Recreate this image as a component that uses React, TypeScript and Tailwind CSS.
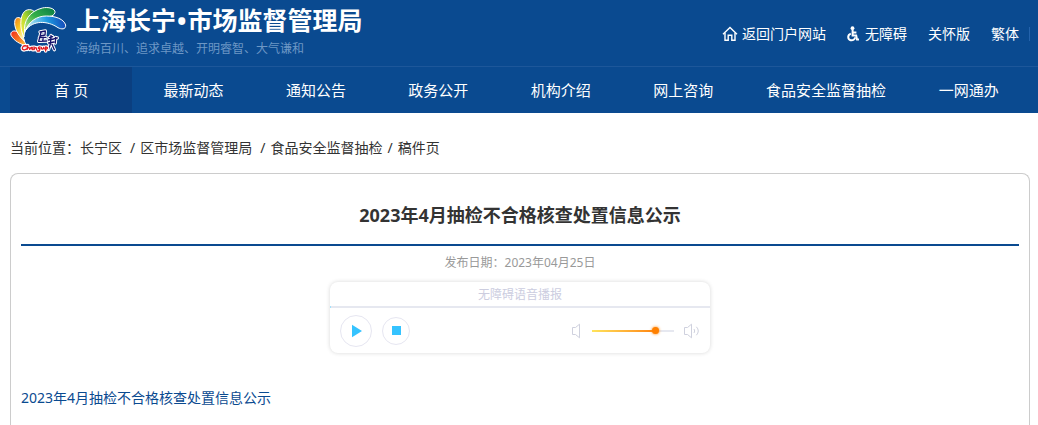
import { useState } from 'react';

const navItems = ['首 页', '最新动态', '通知公告', '政务公开', '机构介绍', '网上咨询', '食品安全监督抽检', '一网通办'];

function Logo() {
  return (
    <svg className="h-12 w-[60px] shrink-0" viewBox="25 19 180 144" fill="none" role="img" aria-label="上海长宁">
      <defs>
        <linearGradient id="p1" x1="0" y1="0" x2="1" y2="1">
          <stop offset="0" stopColor="#f0281e" />
          <stop offset="0.5" stopColor="#f5761e" />
          <stop offset="1" stopColor="#ffd94a" />
        </linearGradient>
        <linearGradient id="p2" x1="0" y1="0" x2="0.5" y2="1">
          <stop offset="0" stopColor="#f07a1c" />
          <stop offset="0.5" stopColor="#fbc822" />
          <stop offset="1" stopColor="#fff6a8" />
        </linearGradient>
        <linearGradient id="p3" x1="1" y1="0" x2="0" y2="1">
          <stop offset="0" stopColor="#2f9a3c" />
          <stop offset="0.5" stopColor="#b5d92c" />
          <stop offset="1" stopColor="#fff04a" />
        </linearGradient>
        <linearGradient id="p4" x1="1" y1="0" x2="0" y2="1">
          <stop offset="0" stopColor="#067a45" />
          <stop offset="0.5" stopColor="#35b049" />
          <stop offset="1" stopColor="#e4f48a" />
        </linearGradient>
        <linearGradient id="p5" x1="1" y1="0.4" x2="0" y2="0.5">
          <stop offset="0" stopColor="#1446b8" />
          <stop offset="0.45" stopColor="#1e9ae0" />
          <stop offset="1" stopColor="#c4f0f4" />
        </linearGradient>
      </defs>
      {/* petals */}
      <g stroke="#fff" strokeWidth="3" strokeLinejoin="round">
        <path fill="url(#p1)" d="M83 139C60 134 42 122 34 107C30 95 45 90 53 97C66 108 72 124 83 139Z" />
        <path fill="url(#p2)" d="M75 125C54 108 41 80 46 61C50 49 66 53 69 64C73 84 66 103 75 125Z" />
        <path fill="url(#p3)" d="M73 112C60 90 60 50 74 36C84 25 107 30 106 43C101 57 74 70 73 112Z" />
        <path fill="url(#p4)" d="M75 99C70 65 90 34 128 25C145 21 168 26 166 39C161 54 142 49 128 54C104 60 82 72 75 99Z" />
        <path fill="url(#p5)" d="M79 91C88 65 112 49 140 49C168 49 192 58 198 76C199 91 184 89 175 84C143 62 99 62 79 91Z" />
      </g>
      {/* ink figures */}
      <g strokeLinecap="round" strokeLinejoin="round">
        <path
          stroke="#fff"
          strokeWidth="10"
          d="M121 97L137 94L136 106L122 109M119 114L139 113M124 99L117 125M131 113L129 124M119 125L141 124M149 114L159 111M154 107L153 125M146 121L162 118M147 130L163 127M153 130L147 149M157 134L164 150M163 117L173 115M168 113L167 130"
        />
        <path
          stroke="#15126b"
          strokeWidth="4"
          d="M121 97L137 94L136 106L122 109M119 114L139 113M124 99L117 125M131 113L129 124M119 125L141 124M149 114L159 111M154 107L153 125M146 121L162 118M147 130L163 127M153 130L147 149M157 134L164 150M163 117L173 115M168 113L167 130"
        />
      </g>
      {/* script along the base */}
      <g strokeLinecap="round" strokeLinejoin="round">
        <path
          stroke="#fff"
          strokeWidth="11"
          d="M80 139C71 136 66 144 69 149C73 152 77 150 80 148M84 138L82 149C86 141 89 141 90 149M98 143C91 142 92 150 98 147L99 150M103 142L103 150C107 141 111 143 111 150M121 142C114 141 115 149 121 147L119 154L113 154M125 143C125 151 130 150 132 143L134 148M138 142L138 154M139 143C144 141 146 147 139 149"
        />
        <path
          stroke="#e01b22"
          strokeWidth="4"
          d="M80 139C71 136 66 144 69 149C73 152 77 150 80 148M84 138L82 149C86 141 89 141 90 149M98 143C91 142 92 150 98 147L99 150M103 142L103 150C107 141 111 143 111 150M121 142C114 141 115 149 121 147L119 154L113 154M125 143C125 151 130 150 132 143L134 148M138 142L138 154M139 143C144 141 146 147 139 149"
        />
      </g>
    </svg>
  );
}

function HomeIcon() {
  return (
    <svg className="size-4" viewBox="0 0 16 16" fill="none" stroke="currentColor" strokeWidth="1.4" aria-hidden="true">
      <path d="M1 8.2L8 1.4L15 8.2" />
      <path d="M3 7V14.3H6.2V9.3H9.8V14.3H13V7" />
    </svg>
  );
}

function WheelchairIcon() {
  return (
    <svg className="h-4 w-3" viewBox="0 0 12 16" fill="none" stroke="currentColor" strokeWidth="2" aria-hidden="true">
      <circle cx="5.5" cy="2.2" r="1.9" fill="currentColor" stroke="none" />
      <path d="M5.6 4V9.6H9.2L10 13.6H12M5.6 6.6H9.4" />
      <path d="M3.8 7.6C0.6 8.6 0.2 13.2 3.6 14.2C6 14.7 7.8 13.4 8.2 11.4" />
    </svg>
  );
}

function SpeakerIcon({ waves = false }: { waves?: boolean }) {
  return (
    <svg className="h-4 w-[18px]" viewBox="0 0 18 16" fill="none" stroke="#cfd1de" aria-hidden="true">
      <path d="M2.5 4.5H5.5L9.5 1.2V14.8L5.5 11.5H2.5Z" strokeLinejoin="round" />
      {waves && <path d="M12 6Q13.4 8 12 10M14.4 3.8Q18.2 8 14.4 12.2" />}
    </svg>
  );
}

function AudioPlayer() {
  const [volume, setVolume] = useState(80);

  return (
    <section className="mx-auto mt-2.5 w-full max-w-[380px] rounded-lg bg-white shadow-[0_0_4px_rgba(0,0,0,0.16)]">
      <div className="h-6 text-center text-xs leading-[26px] text-[#cccddf]">无障碍语音播报</div>
      <div className="h-0.5 bg-[#e6e8f0]">
        <div className="h-0.5 w-px bg-[#a5e2fb]" />
      </div>
      <div className="flex h-[45px] items-center px-2.5">
        <button aria-label="播放" className="flex size-8 items-center justify-center rounded-full border border-[#e6e6f1]">
          <svg className="h-3.5 w-3" viewBox="0 0 12 14" fill="#35c3ff">
            <path d="M2 .8L12 7L2 13.2Z" />
          </svg>
        </button>
        <button aria-label="停止" className="ml-2.5 flex size-7 items-center justify-center rounded-full border border-[#e6e6f1]">
          <span className="size-[9px] bg-[#35c3ff]" />
        </button>
        <div className="ml-auto flex items-center">
          <SpeakerIcon />
          <input
            type="range"
            aria-label="音量"
            min={0}
            max={100}
            value={volume}
            onChange={(e) => setVolume(Number(e.target.value))}
            className="mr-2 ml-1 h-0.5 w-[82px] appearance-none bg-[#e6e8f0] bg-linear-to-r from-[#ffe45c] to-[#ff8000] bg-no-repeat [&::-webkit-slider-thumb]:size-[7px] [&::-webkit-slider-thumb]:appearance-none [&::-webkit-slider-thumb]:rounded-full [&::-webkit-slider-thumb]:bg-[#ff8000] [&::-webkit-slider-thumb]:shadow-[0_0_3px_#ff8000]"
            style={{ backgroundSize: `${volume}% 100%` }}
          />
          <SpeakerIcon waves />
        </div>
      </div>
    </section>
  );
}

export default function App() {
  return (
    <div className="bg-white font-['Noto_Sans','Noto_Sans_CJK_SC',sans-serif] text-sm text-[#333]">
      <header className="bg-[#0a4a90] text-white">
        <div className="flex h-[66px] items-start justify-between px-2">
          <div className="flex pt-1.5">
            <Logo />
            <div className="ml-2">
              <h1 className="text-[25px] leading-7 font-bold">
                上海长宁<span className="mx-px">•</span>市场监督管理局
              </h1>
              <p className="mt-1 text-xs leading-[22px] text-[#6d97c5]">海纳百川、追求卓越、开明睿智、大气谦和</p>
            </div>
          </div>
          <div className="flex items-center gap-[21px] pt-6 leading-5">
            <a href="#home" className="flex items-center gap-1">
              <HomeIcon />
              返回门户网站
            </a>
            <a href="#accessible" className="flex items-center gap-1.5">
              <WheelchairIcon />
              无障碍
            </a>
            <a href="#care">关怀版</a>
            <a href="#traditional" className="flex items-center gap-2.5">
              繁体
              <span className="h-3.5 w-px bg-[#2463ac]" />
            </a>
          </div>
        </div>
        <nav className="border-t border-[#1d579a] pr-2 pl-2.5">
          <ul className="flex text-center text-[15px] leading-[46px]">
            {navItems.map((item, i) => (
              <li
                key={item}
                className={`${item.length > 4 ? 'w-[16%]' : 'w-[12%]'} ${i === 0 ? 'bg-[#0b3f80]' : ''}`}
              >
                <a href="#nav" className="block">{item}</a>
              </li>
            ))}
          </ul>
        </nav>
      </header>

      <main className="pr-2 pl-2.5">
        <div className="flex pt-6 leading-[22px]">
          <span>当前位置：</span>
          <a href="#district">长宁区</a>
          <span className="pr-[5px] pl-2">/</span>
          <a href="#bureau">区市场监督管理局</a>
          <span className="pr-[5px] pl-2">/</span>
          <a href="#food">食品安全监督抽检</a>
          <span className="px-[5px]">/</span>
          <span>稿件页</span>
        </div>

        <article className="mt-3.5 rounded-t-lg border border-b-0 border-[#ccc] px-2.5 pt-6 pb-4">
          <h2 className="border-b-2 border-[#0a4a90] pb-3 text-center text-lg leading-[34px] font-bold">
            2023年4月抽检不合格核查处置信息公示
          </h2>
          <p className="mt-2 text-center text-xs leading-[18px] text-[#999]">发布日期：2023年04月25日</p>
          <AudioPlayer />
          <p className="mt-8 leading-[26px]">
            <a href="#attachment" className="text-[#0a4a90]">2023年4月抽检不合格核查处置信息公示</a>
          </p>
        </article>
      </main>
    </div>
  );
}
